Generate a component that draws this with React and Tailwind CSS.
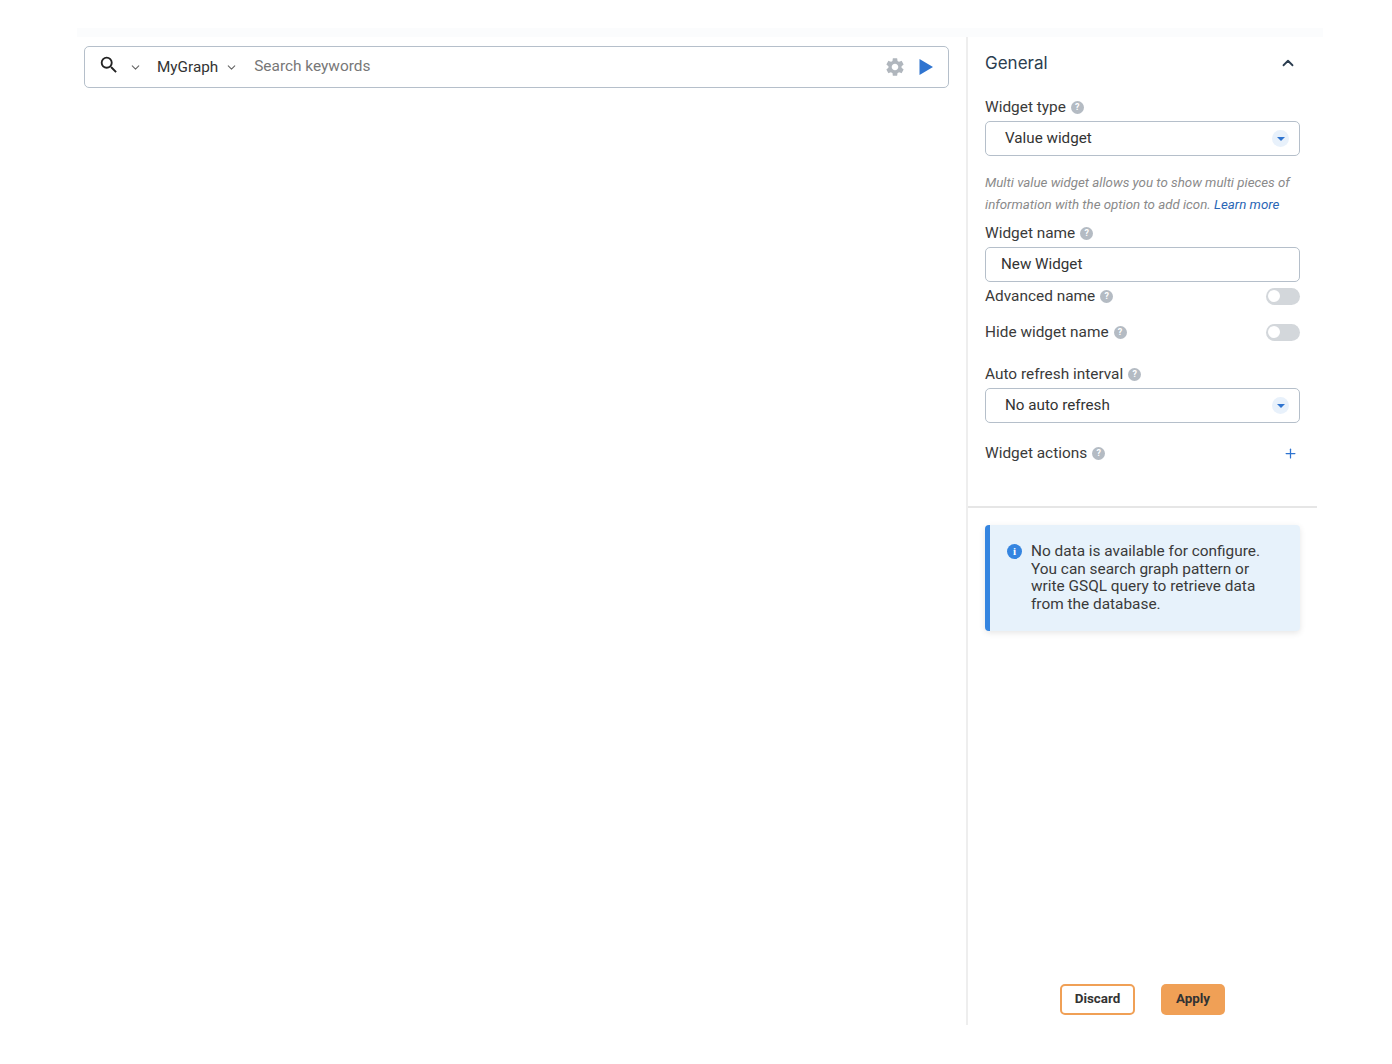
import { ChevronDown, ChevronUp, Plus } from 'lucide-react';
import { MdSearch, MdSettings } from 'react-icons/md';

const Help = () => (
  <span className="ml-[5px] flex h-[13px] w-[13px] items-center justify-center rounded-full bg-[#b4bbc3] text-[9px] font-bold leading-none text-white">?</span>
);

const Label = ({ children, className = '' }) => (
  <div className={`flex items-center text-[15.4px] leading-[20px] text-[#3a3a3a] ${className}`}>
    {children}
    <Help />
  </div>
);

const Select = ({ value }) => (
  <div className="flex h-[35px] items-center justify-between rounded-[5px] border border-[#b5bfca] pl-[19px] pr-[10px] text-[15.2px] text-[#333]">
    {value}
    <span className="flex h-[17px] w-[17px] items-center justify-center rounded-full bg-[#e8f1fb]">
      <span className="h-0 w-0 border-x-[4px] border-t-[4px] border-x-transparent border-t-[#2f74d0]" />
    </span>
  </div>
);

const Toggle = () => (
  <span className="flex h-[17px] w-[34px] items-center rounded-full bg-[#d3d7db] pl-[2px]">
    <span className="h-[12px] w-[12px] rounded-full bg-white" />
  </span>
);

export default function App() {
  return (
    <div className="h-[1064px] w-[1392px] overflow-hidden bg-white pl-[77px] pt-[28px] font-['Roboto',sans-serif]">
      <div className="h-[9px] w-[1246px] bg-[#fbfcfd]" />
      <div className="flex h-[988px]">
        <div className="w-[889px] pl-[7px] pr-[17px] pt-[9px]">
          <div className="flex h-[42px] items-center rounded-[5px] border border-[#b5bfca] pl-[13px] pr-[14px]">
            <MdSearch size={22} className="mb-[4px] text-[#222]" />
            <ChevronDown size={13} strokeWidth={2} className="ml-[9px] text-[#666]" />
            <span className="ml-[15px] text-[15.3px] text-[#333]">MyGraph</span>
            <ChevronDown size={13} strokeWidth={2} className="ml-[7px] text-[#666]" />
            <span className="ml-[16px] flex-1 text-[15.4px] text-[#777]">Search keywords</span>
            <MdSettings size={22} className="mr-[-1px] text-[#b0b6bd]" />
            <svg width="16" height="18" viewBox="0 0 16 18" className="ml-[13px]">
              <path d="M1.5 1 L15 9 L1.5 17 Z" fill="#2f74d0" />
            </svg>
          </div>
        </div>
        <div className="w-[351px] border-l-2 border-[#eeeeee]">
          <div className="h-[471px] border-b-2 border-[#e6e6e6] pl-[17px] pr-[17px]">
            <div className="flex h-[52px] items-center justify-between pr-[3px] pt-[1px]">
              <span className="font-['Inter',sans-serif] text-[17px] font-normal text-[#2c3e50]">General</span>
              <ChevronUp size={18} strokeWidth={2.4} className="mb-[1px] text-[#2c3e50]" />
            </div>
            <Label className="mt-[8px]">Widget type</Label>
            <div className="mt-[4px]"><Select value="Value widget" /></div>
            <p className="mt-[16px] text-[13.3px] italic leading-[22px] text-[#8a8a8a]">
              Multi value widget allows you to show multi pieces of<br />
              information with the option to add icon. <span className="text-[#2a66b5]">Learn more</span>
            </p>
            <Label className="mt-[7px]">Widget name</Label>
            <div className="mt-[4px] flex h-[35px] items-center rounded-[5px] border border-[#b5bfca] pl-[15px] text-[15.2px] text-[#333]">New Widget</div>
            <div className="mt-[4px] flex items-center justify-between">
              <Label>Advanced name</Label>
              <Toggle />
            </div>
            <div className="mt-[16px] flex items-center justify-between">
              <Label>Hide widget name</Label>
              <Toggle />
            </div>
            <Label className="mt-[22px]">Auto refresh interval</Label>
            <div className="mt-[4px]"><Select value="No auto refresh" /></div>
            <div className="mt-[20px] flex items-center justify-between">
              <Label>Widget actions</Label>
              <Plus size={15} strokeWidth={2} className="mr-[2px] text-[#2f74d0]" />
            </div>
          </div>
          <div className="ml-[17px] mt-[17px] flex h-[106px] w-[315px] gap-[9px] rounded-[4px] border-l-[5px] border-[#3585e0] bg-[#e7f2fb] pl-[17px] pt-[18px] shadow-[0_2px_6px_rgba(0,0,0,0.1)]">
            <span className="mt-[1px] flex h-[15px] w-[15px] shrink-0 items-center justify-center rounded-full bg-[#3585e0] font-['Liberation_Serif',serif] text-[11px] font-bold leading-none text-white">i</span>
            <p className="text-[15.4px] leading-[17.6px] text-[#3a3a3a]">
              No data is available for configure.<br />
              You can search graph pattern or<br />
              write GSQL query to retrieve data<br />
              from the database.
            </p>
          </div>
          <div className="mt-[353px] flex justify-center gap-[26px]">
            <button className="h-[31px] w-[75px] rounded-[5px] border-2 border-[#f0a056] text-[13.4px] font-bold text-[#333]">Discard</button>
            <button className="h-[31px] w-[64px] rounded-[5px] bg-[#f0a056] text-[13.4px] font-bold text-[#333]">Apply</button>
          </div>
        </div>
      </div>
    </div>
  );
}
